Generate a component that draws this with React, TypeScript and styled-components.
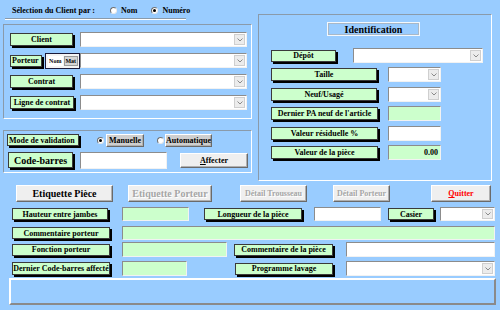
import styled, { createGlobalStyle } from "styled-components";

const GlobalStyle = createGlobalStyle`
  * {
    box-sizing: border-box;
  }
  body {
    margin: 0;
    background: #99ccff;
    font-family: "Liberation Serif", "Times New Roman", serif;
  }
`;

const Page = styled.div`
  width: 500px;
  height: 310px;
  overflow: hidden;
  background: #99ccff;
  display: flex;
  flex-direction: column;
  font-family: "Liberation Serif", "Times New Roman", serif;
  font-weight: bold;
  color: #000;
`;

const Top = styled.div`
  display: flex;
  height: 181px;
  flex-shrink: 0;
`;

const LeftCol = styled.div`
  margin-left: 3px;
  width: 249px;
  display: flex;
  flex-direction: column;
`;

const ClientBar = styled.div`
  margin-left: 2px;
  width: 181px;
  height: 19px;
  padding: 0 0 2px 7px;
  display: flex;
  align-items: flex-end;
  border-bottom: 1px solid #8a9aaa;
  box-shadow: 0 1px 0 #ffffff;
  font-size: 8px;
  line-height: 11px;
  white-space: nowrap;
`;

const RadioItem = styled.label<{ $ml: number }>`
  margin-left: ${(p) => p.$ml}px;
  display: flex;
  align-items: center;
  gap: 4px;
`;

const Radio = styled.span<{ $on?: boolean; $ml?: number }>`
  width: 7px;
  height: 7px;
  margin-left: ${(p) => p.$ml ?? 0}px;
  flex-shrink: 0;
  border-radius: 50%;
  background: #fff;
  border: 1px solid;
  border-color: #707070 #e8e8e8 #e8e8e8 #707070;
  display: flex;
  align-items: center;
  justify-content: center;
  &::after {
    content: "";
    width: 3px;
    height: 3px;
    border-radius: 50%;
    background: ${(p) => (p.$on ? "#000" : "transparent")};
  }
`;

const GroupBox = styled.div<{ $h: number; $mt: number; $pad: string; $gap: number }>`
  height: ${(p) => p.$h}px;
  margin-top: ${(p) => p.$mt}px;
  padding: ${(p) => p.$pad};
  border: 1px solid;
  border-color: #8a9aaa #ffffff #ffffff #8a9aaa;
  display: flex;
  flex-direction: column;
  gap: ${(p) => p.$gap}px;
`;

const RightPanel = styled.div`
  margin-left: 6px;
  margin-top: 14px;
  width: 234px;
  height: 167px;
  padding: 7px 0 0 12px;
  border: 1px solid;
  border-color: #8a9aaa #ffffff #ffffff #8a9aaa;
  display: flex;
  flex-direction: column;
`;

const Heading = styled.div`
  margin-left: 56px;
  width: 93px;
  height: 14px;
  border: 1px solid #f4f8fc;
  outline: 1px solid #a8b8c8;
  outline-offset: -2px;
  display: flex;
  align-items: center;
  justify-content: center;
  font-size: 10px;
`;

const IdRows = styled.div`
  margin-top: 12px;
  display: flex;
  flex-direction: column;
  gap: 4.4px;
`;

const Row = styled.div<{ $h: number; $mt?: number }>`
  height: ${(p) => p.$h}px;
  margin-top: ${(p) => p.$mt ?? 0}px;
  display: flex;
  align-items: center;
  flex-shrink: 0;
`;

const Tag = styled.div<{
  $w: number;
  $h?: number;
  $ml?: number;
  $size?: number;
  $left?: boolean;
}>`
  width: ${(p) => p.$w}px;
  height: ${(p) => p.$h ?? 13}px;
  margin-left: ${(p) => p.$ml ?? 0}px;
  flex-shrink: 0;
  background: #ccffcc;
  border: 1px solid #3a3a3a;
  box-shadow: 2px 2px 0 #000;
  padding: 0 1px;
  display: flex;
  align-items: center;
  justify-content: ${(p) => (p.$left ? "flex-start" : "center")};
  font-size: ${(p) => p.$size ?? 8}px;
  white-space: nowrap;
  overflow: hidden;
`;

const Field = styled.div<{ $w: number; $h?: number; $ml?: number; $green?: boolean }>`
  width: ${(p) => p.$w}px;
  height: ${(p) => p.$h ?? 15}px;
  margin-left: ${(p) => p.$ml ?? 0}px;
  flex-shrink: 0;
  background: ${(p) => (p.$green ? "#ccffcc" : "#ffffff")};
  border: 1px solid;
  border-color: #8c8c8c #f2f2f2 #f2f2f2 #8c8c8c;
  display: flex;
  align-items: center;
  justify-content: flex-end;
  padding-right: 2px;
  font-size: 8px;
`;

const Arrow = styled.span`
  width: 11px;
  align-self: stretch;
  margin: 1px -1px 1px 0;
  background: #ececec;
  border: 1px solid #cfcfcf;
  display: flex;
  align-items: center;
  justify-content: center;
`;

const Toggle = styled.div`
  width: 35px;
  height: 16px;
  margin-left: 3px;
  flex-shrink: 0;
  border: 1px solid #1a1a3a;
  background: #f4f4f4;
  display: flex;
  align-items: stretch;
  padding: 2px 1px 2px 2px;
  gap: 1px;
  font-size: 6px;
`;

const ToggleItem = styled.span<{ $pressed?: boolean }>`
  flex: 1;
  display: flex;
  align-items: center;
  justify-content: center;
  background: ${(p) => (p.$pressed ? "#d6d6d6" : "#ffffff")};
  border: 1px solid ${(p) => (p.$pressed ? "#9a9a9a" : "transparent")};
`;

const Button = styled.div<{
  $w: number;
  $h?: number;
  $ml?: number;
  $size?: number;
  $color?: string;
  $bg?: string;
}>`
  width: ${(p) => p.$w}px;
  height: ${(p) => p.$h ?? 17}px;
  margin-left: ${(p) => p.$ml ?? 0}px;
  flex-shrink: 0;
  background: ${(p) => p.$bg ?? "#efefef"};
  border: 1px solid;
  border-color: #ffffff #6a6a6a #6a6a6a #ffffff;
  box-shadow: inset -1px -1px 0 #b0b0b0;
  display: flex;
  align-items: center;
  justify-content: center;
  font-size: ${(p) => p.$size ?? 8}px;
  color: ${(p) => p.$color ?? "#000"};
  white-space: nowrap;
  u {
    text-decoration: underline;
  }
`;

const Disabled = styled.span`
  color: #a6a6a6;
  text-shadow: 1px 1px 0 #ffffff;
`;

const ButtonRow = styled.div`
  margin-top: 4px;
  height: 17px;
  display: flex;
  align-items: center;
  flex-shrink: 0;
`;

const StatusPanel = styled.div`
  margin: 2px 0 0 9px;
  width: 487px;
  height: 27px;
  flex-shrink: 0;
  border: 2px solid;
  border-color: #ffffff #8a8a8a #8a8a8a #ffffff;
`;

const Chevron = () => (
  <svg width="6" height="4" viewBox="0 0 6 4">
    <polyline points="0.5,0.5 3,3 5.5,0.5" fill="none" stroke="#8a8a8a" strokeWidth="1" />
  </svg>
);

const Combo = ({ w, h, ml }: { w: number; h?: number; ml?: number }) => (
  <Field $w={w} $h={h} $ml={ml}>
    <Arrow>
      <Chevron />
    </Arrow>
  </Field>
);

export default function App() {
  return (
    <Page>
      <GlobalStyle />
      <Top>
        <LeftCol>
          <ClientBar>
            <span>Sélection du Client par :</span>
            <RadioItem $ml={15}>
              <Radio />
              Nom
            </RadioItem>
            <RadioItem $ml={14}>
              <Radio $on />
              Numéro
            </RadioItem>
          </ClientBar>

          <GroupBox $h={95} $mt={5} $pad="7px 0 0 6px" $gap={6}>
            <Row $h={15}>
              <Tag $w={63}>Client</Tag>
              <Combo w={167} ml={7} />
            </Row>
            <Row $h={15}>
              <Tag $w={32} $h={12} $left>
                Porteur
              </Tag>
              <Toggle>
                <ToggleItem>Nom</ToggleItem>
                <ToggleItem $pressed>Mat</ToggleItem>
              </Toggle>
              <Combo w={167} />
            </Row>
            <Row $h={15}>
              <Tag $w={63}>Contrat</Tag>
              <Combo w={167} ml={7} />
            </Row>
            <Row $h={15}>
              <Tag $w={64}>Ligne de contrat</Tag>
              <Combo w={167} ml={6} />
            </Row>
          </GroupBox>

          <GroupBox $h={43} $mt={11} $pad="2px 0 0 3px" $gap={4}>
            <Row $h={14}>
              <Tag $w={72} $h={12} $left>
                Mode de validation
              </Tag>
              <Radio $on $ml={18} />
              <Button $w={38} $h={13} $ml={2} $bg="#cfcfcf">
                Manuelle
              </Button>
              <Radio $ml={13} />
              <Button $w={47} $h={13} $ml={1} $bg="#cfcfcf">
                Automatique
              </Button>
            </Row>
            <Row $h={18}>
              <Tag $w={65} $h={16} $ml={1} $size={10}>
                Code-barres
              </Tag>
              <Field $w={87} $h={17} $ml={7} />
              <Button $w={68} $h={15} $ml={13}>
                <span>
                  <u>A</u>ffecter
                </span>
              </Button>
            </Row>
          </GroupBox>
        </LeftCol>

        <RightPanel>
          <Heading>Identification</Heading>
          <IdRows>
            <Row $h={15}>
              <Tag $w={65} $h={12}>
                Dépôt
              </Tag>
              <Combo w={130} ml={17} />
            </Row>
            <Row $h={15}>
              <Tag $w={106}>Taille</Tag>
              <Combo w={53} ml={11} />
            </Row>
            <Row $h={15}>
              <Tag $w={106}>Neuf/Usagé</Tag>
              <Combo w={53} ml={11} />
            </Row>
            <Row $h={15}>
              <Tag $w={107}>Dernier PA neuf de l'article</Tag>
              <Field $w={53} $ml={10} $green />
            </Row>
            <Row $h={15}>
              <Tag $w={107}>Valeur résiduelle %</Tag>
              <Field $w={53} $ml={10} />
            </Row>
            <Row $h={15}>
              <Tag $w={107}>Valeur de la pièce</Tag>
              <Field $w={53} $ml={10} $green>
                0.00
              </Field>
            </Row>
          </IdRows>
        </RightPanel>
      </Top>

      <ButtonRow>
        <Button $w={97} $ml={16} $size={10}>
          Etiquette Pièce
        </Button>
        <Button $w={84} $ml={15} $size={10}>
          <Disabled>Etiquette Porteur</Disabled>
        </Button>
        <Button $w={67} $ml={28}>
          <Disabled>Détail Trousseau</Disabled>
        </Button>
        <Button $w={57} $ml={26}>
          <Disabled>Détail Porteur</Disabled>
        </Button>
        <Button $w={60} $ml={41} $color="#ff0000">
          <span>
            <u>Q</u>uitter
          </span>
        </Button>
      </ButtonRow>

      <Row $h={14} $mt={5}>
        <Tag $w={96} $h={12} $ml={12}>
          Hauteur entre jambes
        </Tag>
        <Field $w={67} $h={14} $ml={14} $green />
        <Tag $w={98} $h={12} $ml={15}>
          Longueur de la pièce
        </Tag>
        <Field $w={67} $h={14} $ml={12} />
        <Tag $w={46} $h={12} $ml={7}>
          Casier
        </Tag>
        <Combo w={55} h={14} ml={6} />
      </Row>

      <Row $h={14} $mt={5}>
        <Tag $w={98} $h={12} $ml={12}>
          Commentaire porteur
        </Tag>
        <Field $w={373} $h={14} $ml={12} $green />
      </Row>

      <Row $h={15} $mt={2}>
        <Tag $w={98} $h={12} $ml={12}>
          Fonction porteur
        </Tag>
        <Field $w={105} $ml={12} $green />
        <Tag $w={99} $h={12} $ml={7}>
          Commentaire de la pièce
        </Tag>
        <Field $w={149} $ml={13} />
      </Row>

      <Row $h={15} $mt={4}>
        <Tag $w={98} $ml={12}>
          Dernier Code-barres affecté
        </Tag>
        <Field $w={65} $ml={12} $green />
        <Tag $w={98} $h={12} $ml={48}>
          Programme lavage
        </Tag>
        <Combo w={149} ml={13} />
      </Row>

      <StatusPanel />
    </Page>
  );
}
